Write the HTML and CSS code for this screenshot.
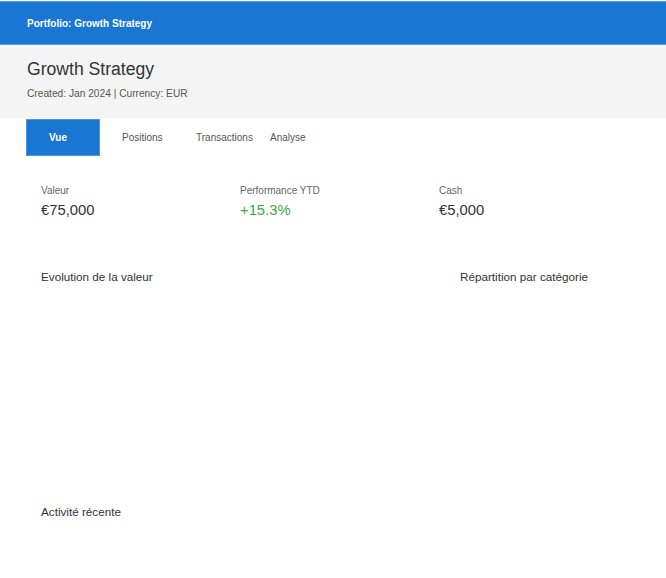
FILE: index.html
```html
<!DOCTYPE html>
<html lang="fr">
<head>
<meta charset="utf-8">
<title>Portfolio: Growth Strategy</title>
<link rel="stylesheet" href="styles.css">
</head>
<body>
<div class="topbar">Portfolio: Growth Strategy</div>
<div class="header">
  <h1 class="title">Growth Strategy</h1>
  <div class="meta">Created: Jan 2024 | Currency: EUR</div>
</div>
<nav class="tabs">
  <div class="tab active">Vue</div>
  <div class="tab">Positions</div>
  <div class="tab">Transactions</div>
  <div class="tab">Analyse</div>
</nav>
<main class="content">
  <section class="stats">
    <div class="stat">
      <div class="stat-label">Valeur</div>
      <div class="stat-value">€75,000</div>
    </div>
    <div class="stat">
      <div class="stat-label">Performance YTD</div>
      <div class="stat-value positive">+15.3%</div>
    </div>
    <div class="stat">
      <div class="stat-label">Cash</div>
      <div class="stat-value">€5,000</div>
    </div>
  </section>
  <section class="charts">
    <div class="card">
      <h2 class="card-title">Evolution de la valeur</h2>
    </div>
    <div class="card card-side">
      <h2 class="card-title">Répartition par catégorie</h2>
    </div>
  </section>
  <section class="activity">
    <h2 class="card-title">Activité récente</h2>
  </section>
</main>
</body>
</html>
```
FILE: styles.css
```css
* { box-sizing: border-box; }
html, body { margin: 0; padding: 0; background: #ffffff; }
body {
  font-family: "Liberation Sans", Arial, sans-serif;
  color: #333333;
}
.topbar {
  margin-top: 1px;
  height: 44px;
  background: #1976d2;
  border-top: 1px solid #5a9fe3;
  border-bottom: 1px solid #5a9fe3;
  color: #ffffff;
  font-size: 10px;
  font-weight: bold;
  padding: 0 27px;
  display: flex;
  align-items: center;
}
.header {
  background: #f4f4f4;
  height: 73px;
  padding: 13px 27px 0;
}
.title {
  margin: 0;
  font-size: 17.6px;
  font-weight: normal;
  line-height: 22px;
  color: #333333;
}
.meta {
  margin-top: 8px;
  font-size: 10.2px;
  color: #555555;
}
.tabs {
  display: flex;
  margin: 1px 0 0 26px;
  height: 37px;
}
.tab {
  width: 74px;
  flex: none;
  padding: 0 22px;
  font-size: 10px;
  color: #555555;
  display: flex;
  align-items: center;
  white-space: nowrap;
}
.tab.active {
  background: #1976d2;
  border: 1px solid #4a95dd;
  color: #ffffff;
  font-weight: bold;
}
.content {
  padding: 0 26px;
}
.stats {
  display: grid;
  grid-template-columns: 199px 199px 199px;
  padding: 29px 15px 0;
}
.stat-label {
  font-size: 10px;
  color: #666666;
  line-height: 12px;
}
.stat-value {
  margin-top: 4px;
  font-size: 14.8px;
  line-height: 18px;
  color: #333333;
}
.stat-value.positive { color: #3aaa48; }
.charts {
  display: grid;
  grid-template-columns: 419px 1fr;
  margin-top: 51px;
  height: 235px;
}
.card {
  padding: 0 15px;
}
.card-title {
  margin: 0;
  font-size: 11.7px;
  font-weight: normal;
  line-height: 14px;
  color: #333333;
}
.activity {
  padding: 0 15px;
}
```
